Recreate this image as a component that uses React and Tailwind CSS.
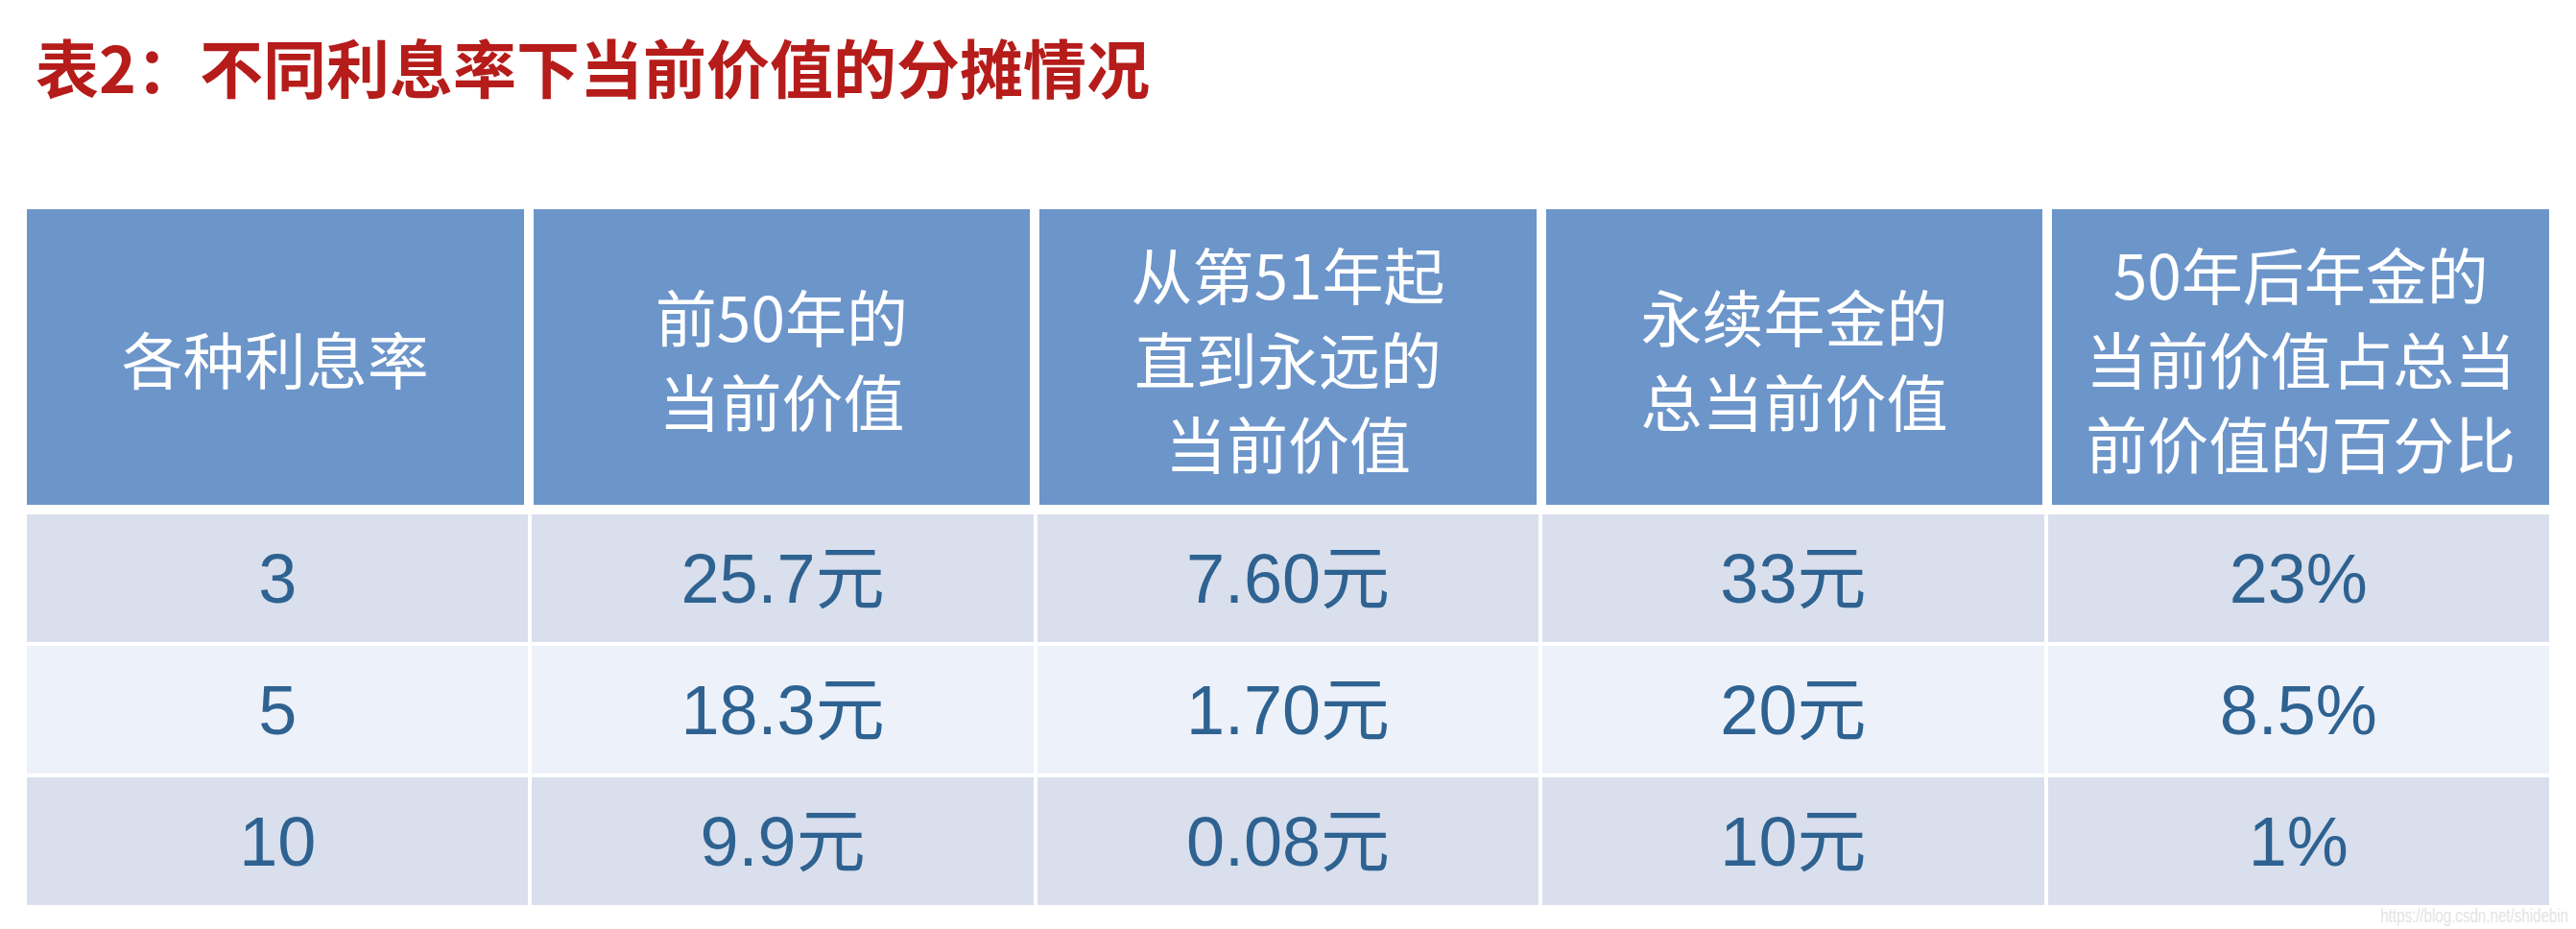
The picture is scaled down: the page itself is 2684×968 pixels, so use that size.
import React from "react";

const headers = [
  ["各种利息率"],
  ["前50年的", "当前价值"],
  ["从第51年起", "直到永远的", "当前价值"],
  ["永续年金的", "总当前价值"],
  ["50年后年金的", "当前价值占总当", "前价值的百分比"],
];

const rows = [
  ["3", "25.7元", "7.60元", "33元", "23%"],
  ["5", "18.3元", "1.70元", "20元", "8.5%"],
  ["10", "9.9元", "0.08元", "10元", "1%"],
];

const cjk = "font-['Noto_Sans_CJK_SC',sans-serif]";

const App = () => {
  return (
    <div className="w-[2684px] h-[968px] bg-white overflow-hidden">
      <h1
        className={`pl-[37px] pt-[35px] text-[66px] leading-[66px] font-bold text-[#b51c1a] ${cjk}`}
      >
        表2：不同利息率下当前价值的分摊情况
      </h1>

      <div className="ml-[28px] mt-[117px] w-[2628px]">
        <div className="grid grid-cols-5 gap-x-[10px] h-[308px]">
          {headers.map((lines, i) => (
            <div
              key={i}
              className={`bg-[#6c95ca] flex flex-col items-center justify-center text-white text-[64px] leading-[88px] text-center ${cjk}`}
            >
              {lines.map((l, j) => (
                <div key={j}>{l}</div>
              ))}
            </div>
          ))}
        </div>

        <div className="mt-[10px] flex flex-col gap-y-[4px]">
          {rows.map((row, r) => (
            <div key={r} className="grid grid-cols-5 gap-x-[4px] h-[133px]">
              {row.map((cell, c) => (
                <div
                  key={c}
                  className={`${
                    r % 2 === 0 ? "bg-[#d9dfec]" : "bg-[#edf1f9]"
                  } flex items-center justify-center text-[#2e6291] text-[72px] font-['Liberation_Sans','Noto_Sans_CJK_SC',sans-serif]`}
                >
                  {cell}
                </div>
              ))}
            </div>
          ))}
        </div>
      </div>

      <div className="flex justify-end pr-[8px] mt-[1px]">
        <span className="text-[21px] leading-[20px] text-[#e4e4e4] font-['Liberation_Sans',sans-serif] scale-x-[0.72] origin-right">
          https://blog.csdn.net/shidebin
        </span>
      </div>
    </div>
  );
};

export default App;
